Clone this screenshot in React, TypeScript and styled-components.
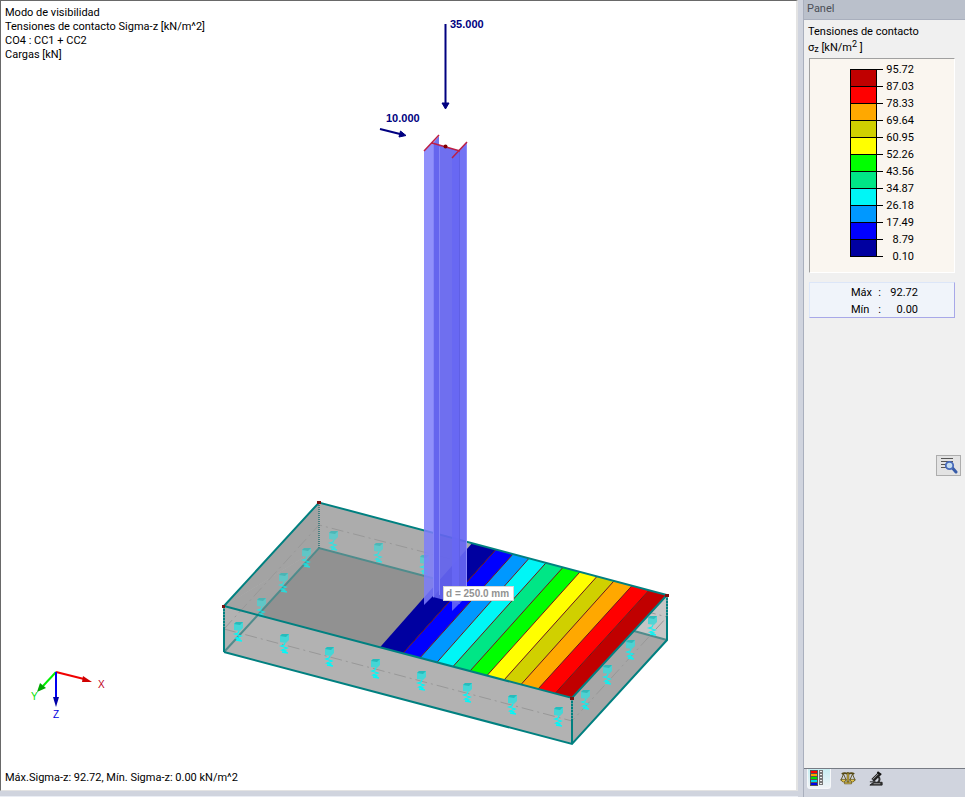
import React from "react";
import styled, { createGlobalStyle } from "styled-components";

const GlobalStyle = createGlobalStyle`
  *, *::before, *::after { box-sizing: border-box; }
  body {
    margin: 0;
    background: #d0d4de;
    color: #000;
    font-family: Roboto, "Liberation Sans", Arial, sans-serif;
    font-size: 11px;
  }
`;

const Window = styled.div`
  display: flex;
  gap: 5px;
  height: 100vh;
`;

const Workspace = styled.main`
  flex: 1;
  min-width: 0;
  display: flex;
  flex-direction: column;
  padding-bottom: 5px;
  border-bottom: 1px solid #eaedf4;
`;

const Viewport = styled.section`
  flex: 1;
  min-height: 0;
  display: grid;
  grid-template: minmax(0, 1fr) / minmax(0, 1fr);
  background: #fff;
  border: 1px solid #696969;
  border-right: 2px solid #e3e3e3;
  border-bottom-color: #e3e3e3;
`;

const Drawing = styled.svg`
  grid-area: 1 / 1;
  width: 100%;
  height: 100%;
`;

const ViewInfo = styled.div<{ $end?: boolean }>`
  grid-area: 1 / 1;
  align-self: ${(p) => (p.$end ? "end" : "start")};
  padding: 5px 4px;
  line-height: 14px;
  white-space: nowrap;
`;

const InfoLine = styled.p`
  margin: 0;
`;

const SidePanel = styled.aside`
  flex: 0 0 162px;
  display: flex;
  flex-direction: column;
  border-left: 1px solid #a9afbd;
`;

const PanelTitle = styled.h1`
  margin: 0;
  padding-left: 3px;
  height: 19px;
  background: #bac0cb;
  color: #4b4f57;
  font-size: 11px;
  font-weight: 400;
  line-height: 18px;
`;

const PanelBody = styled.div`
  flex: 1;
  display: flex;
  flex-direction: column;
  padding: 4px 10px 0 4px;
  background: #f0f0f0;
  border-top: 1px solid #a9afbd;
  border-bottom: 1px solid #777b84;
`;

const PanelText = styled.div`
  line-height: 16px;
  white-space: nowrap;
  sub, sup {
    font-size: 9px;
    line-height: 0;
  }
  sup { vertical-align: 4px; }
  sub { vertical-align: -1px; }
`;

const LegendBox = styled.div`
  display: flex;
  margin: 2px 0 0 1px;
  padding: 2px 0 6px 40px;
  background: #faf6f0;
  border-top: 1px solid #a0a0a0;
  border-left: 1px solid #a0a0a0;
  border-right: 1px solid #fff;
  border-bottom: 1px solid #fff;
`;

const ColorBar = styled.div`
  width: 27px;
  margin: 8px 0 9px;
  border: 1px solid #000;
  border-top: 0;
`;

const Swatch = styled.div<{ $color: string }>`
  height: 17px;
  background: ${(p) => p.$color};
  border-top: 1px solid #000;
`;

const Scale = styled.ol`
  margin: 0;
  padding: 0;
  list-style: none;
`;

const ScaleItem = styled.li`
  display: flex;
  align-items: center;
  width: 37px;
  height: 17px;
  justify-content: space-between;
  line-height: 17px;
  &::before {
    content: "";
    width: 6px;
    height: 1px;
    background: #000;
  }
`;

const Extremes = styled.dl`
  display: grid;
  grid-template-columns: 36px 31px;
  justify-content: end;
  margin: 9px 0 0 1px;
  padding: 1px 36px 0 0;
  height: 36px;
  line-height: 17px;
  background: #f0f4fa;
  border: 1px solid #dce6f8;
  border-right-color: #a8a8e8;
  border-bottom-color: #a8a8e8;
  dt { display: flex; justify-content: space-between; padding-right: 6px; }
  dd { margin: 0; text-align: right; }
`;

const DetailsButton = styled.button`
  align-self: flex-end;
  margin: 137px -6px 0 0;
  width: 25px;
  height: 21px;
  padding: 0;
  display: grid;
  place-items: center;
  background: #e3e3e3;
  border: 1px solid #adadad;
`;

const TabBar = styled.nav`
  display: flex;
  height: 28px;
  padding-left: 3px;
  gap: 4px;
  align-items: flex-start;
`;

const TabButton = styled.button<{ $active?: boolean }>`
  width: 24px;
  height: 20px;
  padding: 0 0 0 1px;
  display: grid;
  align-items: center;
  justify-items: ${(p) => (p.$active ? "start" : "center")};
  border: 1px solid ${(p) => (p.$active ? "#f5f7fa" : "transparent")};
  border-top: 0;
  border-radius: 0 0 3px 3px;
  background: ${(p) => (p.$active ? "linear-gradient(#c8eef2, #f0f3f7)" : "transparent")};
`;

const BANDS = [
  "#c00000", "#ff0000", "#ffa800", "#d0d000", "#ffff00", "#00ff00",
  "#00e686", "#00f6f6", "#0098ff", "#0000ff", "#0000a0",
];
const VALUES = [
  "95.72", "87.03", "78.33", "69.64", "60.95", "52.26",
  "43.56", "34.87", "26.18", "17.49", "8.79", "0.10",
];

const FRONT_X = [380, 403, 420, 437, 453, 470, 487, 504, 521, 538, 555, 572];
const BACK_X = [472, 496, 513, 529, 546, 563, 580, 597, 614, 632, 649, 667];
const frontY = (x: number) => 606 + ((x - 224) * 92) / 348;
const backY = (x: number) => 502.5 + ((x - 319) * 92.5) / 348;

const FRONT_SPRINGS = [
  [238, 627], [284, 639], [329, 652], [375, 664],
  [421, 676], [467, 688], [512, 700], [558, 712],
];
const RIGHT_SPRINGS = [[585, 695], [607, 670], [630, 645], [652, 621]];
const INNER_SPRINGS = [[261, 603], [283, 578], [306, 553], [333, 536], [378, 548], [424, 560]];

function Spring({ x, y }: { x: number; y: number }) {
  return (
    <g transform={`translate(${x} ${y})`}>
      <path d="M-4-3 L-2-5 L5-5 L5 1 L2 4 L-4 3Z" fill="#45d6d6" />
      <path d="M-4-3 L-2-5 L5-5 L2-2 L-4-3Z" fill="#26bcbc" />
      <path d="M1 4 L0 6 L-3 7 L3 9 L-2 11 L2 12 L0 14 M-2 13 L4 14" fill="none" stroke="#00f8f8" strokeWidth="1.3" />
    </g>
  );
}

function Model() {
  return (
    <Drawing viewBox="1 1 795 789" role="img" aria-label="Modelo de zapata y pilar">
      <polygon points="224,606 319,502.5 667,595 667,640 572,744 224,652" fill="#b2b2b2" />
      <polygon points="224,606 319,502.5 319,548" fill="#a3a3a3" />
      <polygon points="224,606 319,548 260,615" fill="#a3a3a3" />
      <polygon points="319,502.5 490,548 470,588 319,548" fill="#acacac" />
      <polygon points="319,548 470,588 380,647 258,615" fill="#919191" />
      <polygon points="667,595 667,640 572,744 572,698" fill="#a7a7a7" />
      <polygon points="667,595 667,640 634,631" fill="#c6c6c6" />

      <g fill="none" stroke="#989898" strokeDasharray="12 4 2 4">
        <path d="M224 629 L572 721 L667 617" />
        <path d="M224 629 L319 525 L470 564 M644 611 L667 617" />
      </g>
      <g fill="none" stroke="#4f8c8c" strokeWidth="2">
        <path d="M224 652 L319 548 L470 588" />
        <path d="M634 631 L667 640" />
      </g>
      <path d="M319 503V548" stroke="#488080" strokeWidth="2" strokeDasharray="1 1" />
      <g opacity="0.7">
        {INNER_SPRINGS.map(([x, y]) => <Spring key={`${x}-${y}`} x={x} y={y} />)}
      </g>
      {FRONT_SPRINGS.map(([x, y]) => <Spring key={`${x}-${y}`} x={x} y={y} />)}
      <g opacity="0.9">
        {RIGHT_SPRINGS.map(([x, y]) => <Spring key={`${x}-${y}`} x={x} y={y} />)}
      </g>

      {[...BANDS].reverse().map((color, i) => (
        <polygon
          key={color}
          points={`${FRONT_X[i]},${frontY(FRONT_X[i])} ${FRONT_X[i + 1]},${frontY(FRONT_X[i + 1])} ${BACK_X[i + 1]},${backY(BACK_X[i + 1])} ${BACK_X[i]},${backY(BACK_X[i])}`}
          fill={color}
        />
      ))}
      {FRONT_X.slice(1, -1).map((x, i) => (
        <line key={x} x1={x} y1={frontY(x)} x2={BACK_X[i + 1]} y2={backY(BACK_X[i + 1])} stroke="#6c1818" />
      ))}

      <g fill="none" stroke="#008080" strokeWidth="2">
        <path d="M224 652 V606 L319 502.5 L667 595 L572 698 L224 606" />
        <path d="M224 652 L572 744 L667 640 V595" />
        <path d="M572 698 V744" />
      </g>
      <g stroke="#a8b8b8" strokeDasharray="1 2">
        <path d="M224 608V629 M572 700V721 M667 597V617" />
      </g>
      <g fill="#7a1010">
        <path d="M317 501h4v3h-4z M222 605h3v3h-3z M665 594h4v3h-4z M570 697h4v3h-4z" />
      </g>

      <polygon points="433,143 439,136 439,590 433,598" fill="#7676ed" />
      <polygon points="433,143 460,151 460,604 433,597" fill="#6464ee" fillOpacity="0.93" />
      <polygon points="424,151 433,142 433,596 424,605" fill="#7e7efa" fillOpacity="0.86" />
      <polygon points="452,157 467,142 467,596 452,611" fill="#6767f3" fillOpacity="0.92" />
      <path d="M433.5 144V597 M439.5 147V595" stroke="#8585f7" />
      <path d="M459.5 151V603" stroke="#5f5fe5" />
      <path d="M466.5 144V596" stroke="#8c8cfa" />
      <path d="M424 151 L439 135 M432 143 L460 151 M452 158 L467 142" fill="none" stroke="#bd2045" strokeWidth="1.5" />
      <circle cx="445.500" cy="146.500" r="2" fill="#800000" />

      <g fill="#000080" stroke="#000080">
        <path d="M445.500 24V104 M380 129L402 134.500" strokeWidth="2" />
        <path d="M442 103H449L445.500 109Z M400.500 131L406 135.500L399 137Z" />
      </g>
      <g fontFamily="Liberation Sans, Arial, sans-serif" fontWeight="700">
        <g fill="#000080" fontSize="11">
          <text x="450" y="28">35.000</text>
          <text x="386" y="122">10.000</text>
        </g>
        <rect x="443.500" y="586.500" width="70" height="14" fill="#fff" stroke="#d5d5d5" />
        <text x="446" y="597" fill="#929292" fontSize="10">d = 250.0 mm</text>
      </g>
      <g fill="none" strokeWidth="2">
        <path d="M56 672L84 679" stroke="#f00000" />
        <path d="M56 672L43 686" stroke="#00f000" />
        <path d="M56 672V699" stroke="#0000f0" />
      </g>
      <path d="M83 676L92 682L82 682Z" fill="#d00000" />
      <path d="M40 683L46 688L37 692Z" fill="#00a800" />
      <path d="M53 697H59L56 707Z" fill="#0000a8" />
      <g fontFamily="Liberation Sans, Arial, sans-serif" fontSize="10">
        <text x="98" y="688" fill="#c00020">X</text>
        <text x="31" y="700" fill="#00e000">Y</text>
        <text x="53" y="718" fill="#0000e0">Z</text>
      </g>
    </Drawing>
  );
}

function DetailsIcon() {
  return (
    <svg width="18" height="17" viewBox="0 0 18 17" aria-hidden="true">
      <path d="M1 1.500H13M1 4.500H13M1 7.500H6M1 10.500H6" stroke="#555" />
      <path d="M12.500 11L16 15" stroke="#385ca8" strokeWidth="3" strokeLinecap="round" />
      <circle cx="9.500" cy="8.500" r="3.700" fill="#c5ddef" stroke="#486abb" strokeWidth="1.800" />
    </svg>
  );
}

function ColorsIcon() {
  const colors = ["#f00", "#ffa000", "#00e000", "#00d8e8", "#0000e8"];
  return (
    <svg width="16" height="17" viewBox="0 0 16 17" aria-hidden="true">
      <rect x="1" width="8" height="16" fill="#555" />
      {colors.map((c, i) => (
        <g key={c}>
          <rect x="2" y={i * 3 + 1} width="6" height="2" fill={c} />
          <rect x="10.500" y={i * 3 + 0.5} width="3" height="2" fill="#eee" stroke="#777" />
        </g>
      ))}
    </svg>
  );
}

function BalanceIcon() {
  return (
    <svg width="16" height="15" viewBox="0 0 18 16" aria-hidden="true">
      <g fill="none" stroke="#544813">
        <path d="M2 3Q5 1 9 3Q13 1 16 3M9 1V12" strokeWidth="2" />
        <path d="M4 3L1 10H7L4 3M14 3L11 10H17L14 3" />
      </g>
      <path d="M1 9H7Q6 12 4 12Q2 12 1 9M11 9H17Q16 12 14 12Q12 12 11 9M8 2H10V12H8ZM5 12H13V14H5Z" fill="#e2c34c" stroke="#544813" strokeWidth="0.700" />
    </svg>
  );
}

function MicroscopeIcon() {
  return (
    <svg width="16" height="16" viewBox="0 0 17 17" aria-hidden="true">
      <path d="M11 6Q14 9 10 13" fill="none" stroke="#333" strokeWidth="2" />
      <path d="M5 10L12 3" stroke="#222" strokeWidth="4" />
      <path d="M5 9L11 3" stroke="#aaa" />
      <path d="M10 1L14 4" stroke="#111" strokeWidth="2" />
      <path d="M2 11.500H8M2 15H15V12H6Z" fill="#333" stroke="#222" />
      <path d="M6 13.500H13" stroke="#999" />
    </svg>
  );
}

export default function App() {
  return (
    <>
      <GlobalStyle />
      <Window>
        <Workspace>
          <Viewport>
            <Model />
            <ViewInfo>
              <InfoLine>Modo de visibilidad</InfoLine>
              <InfoLine>Tensiones de contacto Sigma-z [kN/m^2]</InfoLine>
              <InfoLine>CO4 : CC1 + CC2</InfoLine>
              <InfoLine>Cargas [kN]</InfoLine>
            </ViewInfo>
            <ViewInfo $end>
              <InfoLine>Máx.Sigma-z: 92.72, Mín. Sigma-z: 0.00 kN/m^2</InfoLine>
            </ViewInfo>
          </Viewport>
        </Workspace>
        <SidePanel>
          <PanelTitle>Panel</PanelTitle>
          <PanelBody>
            <PanelText>Tensiones de contacto</PanelText>
            <PanelText>σ<sub>z</sub> [kN/m<sup>2</sup> ]</PanelText>
            <LegendBox>
              <ColorBar>
                {BANDS.map((color) => <Swatch key={color} $color={color} />)}
              </ColorBar>
              <Scale>
                {VALUES.map((value) => <ScaleItem key={value}>{value}</ScaleItem>)}
              </Scale>
            </LegendBox>
            <Extremes>
              <dt><span>Máx</span><span>:</span></dt>
              <dd>92.72</dd>
              <dt><span>Mín</span><span>:</span></dt>
              <dd>0.00</dd>
            </Extremes>
            <DetailsButton type="button" aria-label="Detalles"><DetailsIcon /></DetailsButton>
          </PanelBody>
          <TabBar>
            <TabButton type="button" $active aria-label="Escala de colores"><ColorsIcon /></TabButton>
            <TabButton type="button" aria-label="Factores"><BalanceIcon /></TabButton>
            <TabButton type="button" aria-label="Filtro"><MicroscopeIcon /></TabButton>
          </TabBar>
        </SidePanel>
      </Window>
    </>
  );
}
